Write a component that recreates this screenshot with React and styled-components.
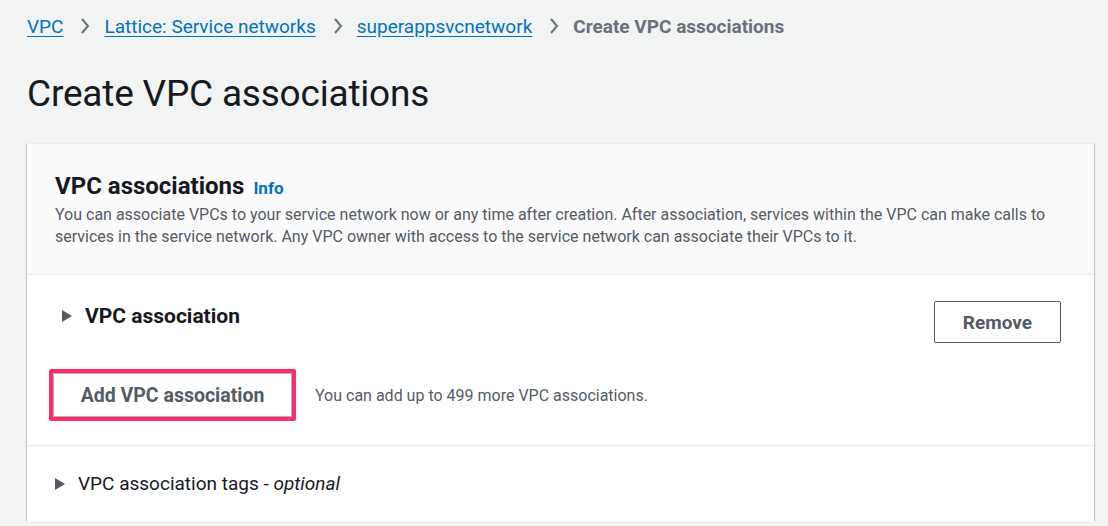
import React from "react"
import styled, { createGlobalStyle } from "styled-components"

const GlobalStyle = createGlobalStyle`
  html, body {
    margin: 0;
    padding: 0;
    background: #f2f3f3;
    font-family: Roboto, "Liberation Sans", sans-serif;
    color: #16191f;
  }
`

const Page = styled.div`
  padding: 14px 14px 0 27px;
`

const Crumbs = styled.nav`
  display: flex;
  align-items: center;
  height: 24px;
  font-size: 19px;
`

const Crumb = styled.a`
  color: #0073bb;
  text-decoration: underline;
  text-underline-offset: 3px;
`

const Current = styled.span`
  color: #687078;
  font-weight: 700;
`

const Sep = styled.span`
  display: flex;
  align-items: center;
  margin: 0 14px 0 17px;
  color: #687078;
`

const Title = styled.h1`
  margin: 34px 0 0;
  font-size: 37px;
  font-weight: 400;
  line-height: 44px;
  letter-spacing: -0.2px;
`

const Card = styled.section`
  margin-top: 27px;
  background: #fff;
  box-shadow: 0 1px 1px 0 rgba(0, 28, 36, 0.3), 1px 1px 1px 0 rgba(0, 28, 36, 0.15), -1px 1px 1px 0 rgba(0, 28, 36, 0.15);
  border-top: 1px solid #eaeded;
`

const CardHeader = styled.header`
  background: #fafafa;
  border-bottom: 1px solid #eaeded;
  padding: 27px 28px 26px;
`

const HeaderRow = styled.div`
  display: flex;
  align-items: baseline;
  gap: 9px;
`

const CardTitle = styled.h2`
  margin: 0;
  font-size: 24px;
  font-weight: 700;
  line-height: 30px;
`

const Info = styled.a`
  color: #0073bb;
  font-size: 17px;
  font-weight: 700;
`

const Desc = styled.p`
  margin: 3px 0 0;
  font-size: 16px;
  line-height: 22px;
  color: #545b64;
`

const Body = styled.div`
  padding: 29px 33px 24px 22px;
  border-bottom: 1px solid #eaeded;
`

const ItemRow = styled.div`
  display: flex;
  justify-content: space-between;
  align-items: flex-start;
`

const Expander = styled.div`
  display: flex;
  align-items: center;
  gap: ${p => p.gap}px;
  padding-left: ${p => p.indent}px;
  font-size: ${p => p.size}px;
  font-weight: ${p => (p.bold ? 700 : 400)};
  color: #16191f;
`

const Caret = () => (
  <svg width="10" height="12" viewBox="0 0 10 12">
    <path d="M0 0 L10 6 L0 12 Z" fill="#545b64" />
  </svg>
)

const Button = styled.button`
  font-family: inherit;
  font-size: 19px;
  font-weight: 700;
  color: #545b64;
  background: #fff;
  border: 1px solid #545b64;
  border-radius: 2px;
  padding: 0 28px;
  height: 42px;
  margin-top: -3px;
  cursor: pointer;
`

const AddRow = styled.div`
  display: flex;
  align-items: center;
  gap: 19px;
  margin-top: 26px;
`

const Highlight = styled.div`
  border: 4px solid #ff2d6a;
  border-radius: 2px;
`

const AddButton = styled(Button)`
  display: block;
  height: 44px;
  width: 239px;
  margin: 0;
  padding: 0;
  border: 1px solid #aab7b8;
  border-radius: 0;
  font-size: 19.5px;
`

const Hint = styled.span`
  font-size: 16px;
  color: #545b64;
`

const Footer = styled.div`
  padding: 26px 28px 26px;
`

const Chevron = () => (
  <Sep>
    <svg width="10" height="16" viewBox="0 0 10 16">
      <path d="M2 1 L8 8 L2 15" fill="none" stroke="#687078" strokeWidth="2" />
    </svg>
  </Sep>
)

export default function App() {
  return (
    <>
      <GlobalStyle />
      <Page>
        <Crumbs>
          <Crumb>VPC</Crumb>
          <Chevron />
          <Crumb>Lattice: Service networks</Crumb>
          <Chevron />
          <Crumb>superappsvcnetwork</Crumb>
          <Chevron />
          <Current>Create VPC associations</Current>
        </Crumbs>
        <Title>Create VPC associations</Title>
        <Card>
          <CardHeader>
            <HeaderRow>
              <CardTitle>VPC associations</CardTitle>
              <Info>Info</Info>
            </HeaderRow>
            <Desc>
              You can associate VPCs to your service network now or any time after creation. After association, services within the VPC can make calls to services in the service network. Any VPC owner with access to the service network can associate their VPCs to it.
            </Desc>
          </CardHeader>
          <Body>
            <ItemRow>
              <Expander indent={13} gap={13} size={21} bold>
                <Caret />
                VPC association
              </Expander>
              <Button>Remove</Button>
            </ItemRow>
            <AddRow>
              <Highlight>
                <AddButton>Add VPC association</AddButton>
              </Highlight>
              <Hint>You can add up to 499 more VPC associations.</Hint>
            </AddRow>
          </Body>
          <Footer>
            <Expander indent={0} gap={13} size={19}>
              <Caret />
              <span>
                VPC association tags - <i>optional</i>
              </span>
            </Expander>
          </Footer>
        </Card>
      </Page>
    </>
  )
}
